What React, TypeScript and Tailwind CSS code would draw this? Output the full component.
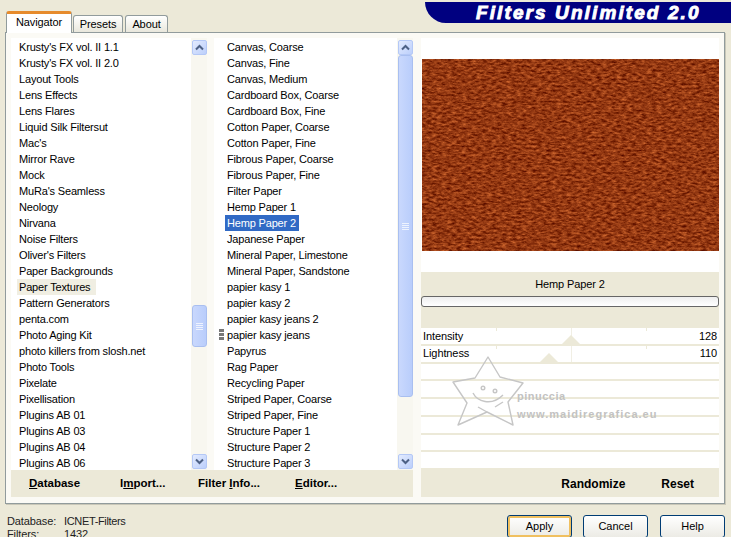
import React from 'react';

const FONT = "font-['Liberation_Sans',Arial,sans-serif]";

const filters = [
  "Krusty's FX vol. II 1.1", "Krusty's FX vol. II 2.0", 'Layout Tools', 'Lens Effects', 'Lens Flares',
  'Liquid Silk Filtersut', "Mac's", 'Mirror Rave', 'Mock', "MuRa's Seamless", 'Neology', 'Nirvana',
  'Noise Filters', "Oliver's Filters", 'Paper Backgrounds', 'Paper Textures', 'Pattern Generators',
  'penta.com', 'Photo Aging Kit', 'photo killers from slosh.net', 'Photo Tools', 'Pixelate', 'Pixellisation',
  'Plugins AB 01', 'Plugins AB 03', 'Plugins AB 04', 'Plugins AB 06',
];

const papers = [
  'Canvas, Coarse', 'Canvas, Fine', 'Canvas, Medium', 'Cardboard Box, Coarse', 'Cardboard Box, Fine',
  'Cotton Paper, Coarse', 'Cotton Paper, Fine', 'Fibrous Paper, Coarse', 'Fibrous Paper, Fine', 'Filter Paper',
  'Hemp Paper 1', 'Hemp Paper 2', 'Japanese Paper', 'Mineral Paper, Limestone', 'Mineral Paper, Sandstone',
  'papier kasy 1', 'papier kasy 2', 'papier kasy jeans 2', 'papier kasy jeans', 'Papyrus', 'Rag Paper',
  'Recycling Paper', 'Striped Paper, Coarse', 'Striped Paper, Fine', 'Structure Paper 1', 'Structure Paper 2',
  'Structure Paper 3',
];

const ScrollButton = ({ dir }: { dir: 'up' | 'down' }) => (
  <div className="w-[15px] h-[15px] shrink-0 ml-px rounded-[2px] border border-[#b4c8f6] bg-gradient-to-br from-[#e3ebfe] to-[#bccffb] flex items-center justify-center">
    <svg width="9" height="7" viewBox="0 0 9 7">
      <polyline
        points={dir === 'up' ? '1,5.5 4.5,2 8,5.5' : '1,1.5 4.5,5 8,1.5'}
        fill="none"
        stroke="#4d6185"
        strokeWidth="2"
      />
    </svg>
  </div>
);

const Grip = () => (
  <div className="flex flex-col gap-[1px] items-center">
    <div className="w-[7px] h-[1px] bg-[#eef3fe]" />
    <div className="w-[7px] h-[1px] bg-[#eef3fe]" />
    <div className="w-[7px] h-[1px] bg-[#eef3fe]" />
    <div className="w-[7px] h-[1px] bg-[#eef3fe]" />
  </div>
);

const ScrollBar = ({ before, thumb }: { before: number; thumb: number }) => (
  <div className="w-[16px] shrink-0 flex flex-col bg-[#f8f7f0] pt-[2px] pb-px">
    <ScrollButton dir="up" />
    <div className="shrink-0" style={{ height: before }} />
    <div
      className="shrink-0 ml-px rounded-[3px] border border-[#a9bff0] bg-gradient-to-r from-[#c9d8fd] to-[#b9cdfb] flex items-center justify-center"
      style={{ height: thumb }}
    >
      <Grip />
    </div>
    <div className="flex-1" />
    <ScrollButton dir="down" />
  </div>
);

const BarButton = ({ children, className = '' }: { children: React.ReactNode; className?: string }) => (
  <span className={`text-[11.5px] font-bold text-black leading-none whitespace-nowrap ${className}`}>{children}</span>
);

const Tab = ({ label, width, active }: { label: string; width: string; active?: boolean }) =>
  active ? (
    <div
      className={`${width} h-[22px] pb-[2px] bg-white border-x border-[#919b9c] border-t-[3px] border-t-[#e68b2c] rounded-t-[3px] flex items-center justify-center text-[11px] tracking-[-0.1px] text-black relative z-10 -mb-px`}
    >
      {label}
    </div>
  ) : (
    <div
      className={`${width} h-[17px] bg-gradient-to-b from-white to-[#e9e7dc] border-x border-t border-[#919b9c] rounded-t-[3px] flex items-center justify-center text-[11px] tracking-[-0.1px] text-black`}
    >
      {label}
    </div>
  );

const SliderRow = ({ label, value, at }: { label?: string; value?: number; at?: number }) => (
  <div className="h-[17.75px] shrink-0 bg-white border-b-2 border-[#ece9d8] flex items-center justify-between px-[2px] text-[11px] tracking-[-0.1px] text-black relative">
    <span>{label}</span>
    <span>{value}</span>
    {label && (
      <>
        <div className="absolute left-[75px] top-0 w-px h-[3px] bg-[#ece9d8]" />
        <div className="absolute left-[150px] top-0 w-px h-full bg-[#f1efe4]" />
        <div className="absolute left-[225px] top-0 w-px h-[3px] bg-[#ece9d8]" />
      </>
    )}
    {at !== undefined && (
      <div
        className="absolute bottom-0 w-0 h-0 border-x-[9px] border-x-transparent border-b-[9px] border-b-[#ece9d8]"
        style={{ left: at - 9 }}
      />
    )}
  </div>
);

const DialogButton = ({ label, primary }: { label: string; primary?: boolean }) => (
  <div
    className={`w-[65px] h-[23px] rounded-[3px] border border-[#003c74] bg-gradient-to-b from-white to-[#ecebe5] flex items-center justify-center text-[11px] text-black ${
      primary ? 'shadow-[inset_0_0_0_2px_#f0c060]' : ''
    }`}
  >
    {label}
  </div>
);

export default function App() {
  return (
    <div className={`w-[731px] h-[537px] overflow-hidden bg-[#ece9d8] flex flex-col ${FONT} relative`}>
      {/* tabs + banner */}
      <div className="h-[32px] shrink-0 flex items-end pl-[6px] gap-px relative">
        <Tab label="Navigator" width="w-[66px]" active />
        <Tab label="Presets" width="w-[50px]" />
        <Tab label="About" width="w-[43px] ml-px" />
        <div className="absolute left-[425px] right-0 top-[2px] h-[21px] bg-[#000080] rounded-bl-[26px] flex items-center pl-[51px]">
          <span className="text-[19px] font-bold italic text-white tracking-[2.1px] leading-none [-webkit-text-stroke:0.9px_white]">
            Filters Unlimited 2.0
          </span>
        </div>
      </div>

      {/* main panel */}
      <div className="h-[472px] shrink-0 ml-[5px] w-[720px] border border-[#919b9c] shadow-[1px_1px_0_#c9c7b8] bg-[#fbfaf5] pt-[5px] pb-[6px] px-[5px] flex gap-[8px]">
        <div className="w-[402px] shrink-0 flex flex-col">
          <div className="flex-1 flex gap-[7px] min-h-0">
            <div className="w-[196px] shrink-0 bg-white flex">
              <div className="flex-1 pl-[8px] pt-px">
                {filters.map((f) => (
                  <div key={f} className="h-[16px] flex items-center text-[11px] tracking-[-0.17px] text-black whitespace-nowrap">
                    <span
                      className={f === 'Paper Textures' ? 'bg-[#f0eee2] -ml-[2px] pl-[2px] pr-[6px] leading-[16px]' : ''}
                    >
                      {f}
                    </span>
                  </div>
                ))}
              </div>
              <ScrollBar before={250} thumb={42} />
            </div>
            <div className="w-[199px] shrink-0 bg-white flex">
              <div className="flex-1 pl-[13px] pt-px">
                {papers.map((p) => (
                  <div key={p} className="h-[16px] flex items-center text-[11px] tracking-[-0.17px] text-black whitespace-nowrap relative">
                    <span
                      className={p === 'Hemp Paper 2' ? 'bg-[#316ac5] text-white -ml-[2px] pl-[2px] pr-[3px] leading-[16px]' : ''}
                    >
                      {p}
                    </span>
                    {p === 'papier kasy jeans' && (
                      <div className="absolute left-[-8px] top-[2px] flex flex-col gap-[1px]">
                        <div className="w-[5px] h-[3px] bg-[#777]" />
                        <div className="w-[5px] h-[3px] bg-[#777]" />
                        <div className="w-[5px] h-[3px] bg-[#777]" />
                      </div>
                    )}
                  </div>
                ))}
              </div>
              <ScrollBar before={0} thumb={342} />
            </div>
          </div>
          <div className="h-[27px] shrink-0 bg-[#ece9d8] flex items-center pl-[18px]">
            <BarButton className="w-[91px]">
              <u>D</u>atabase
            </BarButton>
            <BarButton className="w-[78px]">
              I<u>m</u>port...
            </BarButton>
            <BarButton className="w-[97px]">
              Filter <u>I</u>nfo...
            </BarButton>
            <BarButton>
              <u>E</u>ditor...
            </BarButton>
          </div>
        </div>

        <div className="w-[298px] shrink-0 flex flex-col relative">
          <div className="h-[234px] shrink-0 bg-white pt-[21px] pl-px">
            <svg width="297" height="192" className="block">
              <filter id="hemp" x="0" y="0" width="100%" height="100%" colorInterpolationFilters="sRGB">
                <feTurbulence type="fractalNoise" baseFrequency="0.2 0.45" numOctaves="4" seed="7" />
                <feColorMatrix
                  type="matrix"
                  values="0.65 0 0 0 0.25  0.5 0 0 0 -0.03  0.3 0 0 0 -0.08  0 0 0 0 1"
                />
              </filter>
              <rect width="297" height="192" fill="#a83f0c" filter="url(#hemp)" />
            </svg>
          </div>
          <div className="h-[56px] shrink-0 bg-[#ece9d8] flex flex-col">
            <div className="h-[24px] flex items-center justify-center text-[11px] tracking-[-0.1px] text-black">Hemp Paper 2</div>
            <div className="h-[11px] rounded-[3px] border border-[#666] bg-gradient-to-b from-[#eeeeee] to-white" />
          </div>
          <div className="flex-1 flex flex-col min-h-0 bg-white">
            <SliderRow label="Intensity" value={128} at={150} />
            <SliderRow label="Lightness" value={110} at={128} />
            <SliderRow />
            <SliderRow />
            <SliderRow />
            <SliderRow />
            <SliderRow />
            <SliderRow />
          </div>
          <div className="h-[27px] shrink-0 bg-[#ece9d8] flex items-center justify-end pr-[25px] gap-[36px]">
            <BarButton className="text-[12px]">Randomize</BarButton>
            <BarButton className="text-[12px]">Reset</BarButton>
          </div>

          {/* watermark */}
          <svg
            className="absolute left-[30px] top-[317px] pointer-events-none"
            width="75"
            height="75"
            viewBox="0 0 75 75"
            fill="none"
            stroke="#c6c6c6"
            strokeWidth="1.4"
          >
            <path d="M37 2 L49 22 L72 28 L57 47 L62 70 L36 57 L7 70 L16 48 L2 27 L24 23 Z" strokeLinejoin="round" />
            <circle cx="32" cy="33" r="1.8" />
            <circle cx="44" cy="36" r="1.8" />
            <path d="M22 38 C26 46 40 52 52 40" />
            <path d="M27 52 L36 57" />
            <path d="M44 52 L52 47" />
          </svg>
          <div className="absolute left-[96px] top-[353px] text-[11px] leading-none text-[#c2c2c2] font-bold tracking-[0.5px] pointer-events-none">
            pinuccia
          </div>
          <div className="absolute left-[96px] top-[371px] text-[11px] leading-none text-[#c2c2c2] font-bold tracking-[1px] pointer-events-none whitespace-nowrap">
            www.maidiregrafica.eu
          </div>
        </div>
      </div>

      {/* footer */}
      <div className="flex-1 flex justify-between pl-[7px] pr-[6px] min-h-0">
        <div className="grid grid-cols-[57px_auto] pt-[11px] text-[11px] tracking-[-0.1px] leading-[13px] text-[#222]">
          <span>Database:</span>
          <span className="tracking-[-0.35px]">ICNET-Filters</span>
          <span>Filters:</span>
          <span>1432</span>
        </div>
        <div className="flex pt-[11px]">
          <DialogButton label="Apply" primary />
          <div className="w-[11px]" />
          <DialogButton label="Cancel" />
          <div className="w-[12px]" />
          <DialogButton label="Help" />
        </div>
      </div>
    </div>
  );
}
